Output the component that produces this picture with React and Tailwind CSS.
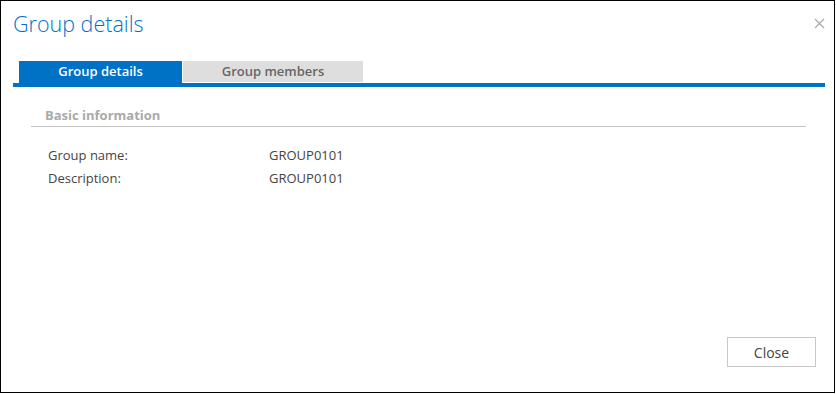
import { X } from "lucide-react";

const font = { fontFamily: "'Open Sans', 'Liberation Sans', sans-serif" };

export default function App() {
  return (
    <div className="w-[836px] h-[394px] bg-white" style={font}>
      <div className="w-[835px] h-[393px] border border-black flex flex-col">
        {/* Header */}
        <div className="flex items-start justify-between pl-[12px] pr-[6px] pt-[8px] h-[51px]">
          <h1 className="text-[21.5px] font-light text-[#0072c6] leading-[30px]">
            Group details
          </h1>
          <button className="mt-[6px] text-[#a6a6a6]">
            <X size={17} strokeWidth={1.5} />
          </button>
        </div>

        {/* Tabs */}
        <div className="ml-[12px] mr-[9px] mt-[9px]">
          <div className="flex items-start pl-[6px] gap-px h-[22px]">
            <div className="w-[163px] h-[22px] bg-[#0072c6] text-white text-[13px] font-semibold flex items-center justify-center">
              Group details
            </div>
            <div className="w-[180px] h-[21px] bg-[#dedede] text-[#666] text-[13px] font-semibold flex items-center justify-center">
              Group members
            </div>
          </div>
          <div className="h-[4px] bg-[#0072c6]" />
        </div>

        {/* Basic information */}
        <div className="ml-[30px] mr-[28px] mt-[19px]">
          <div className="border-b border-[#c4c4c4] pl-[14px] pb-[2px] text-[13px] font-bold text-[#aaa] leading-[18px]">
            Basic information
          </div>
          <div className="pl-[17px] pt-[17px] text-[13px] text-[#444] leading-[23px]">
            <div className="flex">
              <span className="w-[221px]">Group name:</span>
              <span>GROUP0101</span>
            </div>
            <div className="flex">
              <span className="w-[221px]">Description:</span>
              <span>GROUP0101</span>
            </div>
          </div>
        </div>

        {/* Footer */}
        <div className="mt-auto flex justify-end pr-[18px] pb-[25px]">
          <button className="w-[89px] h-[30px] border border-[#c6c6c6] text-[14px] text-[#444] bg-white">
            Close
          </button>
        </div>
      </div>
    </div>
  );
}
